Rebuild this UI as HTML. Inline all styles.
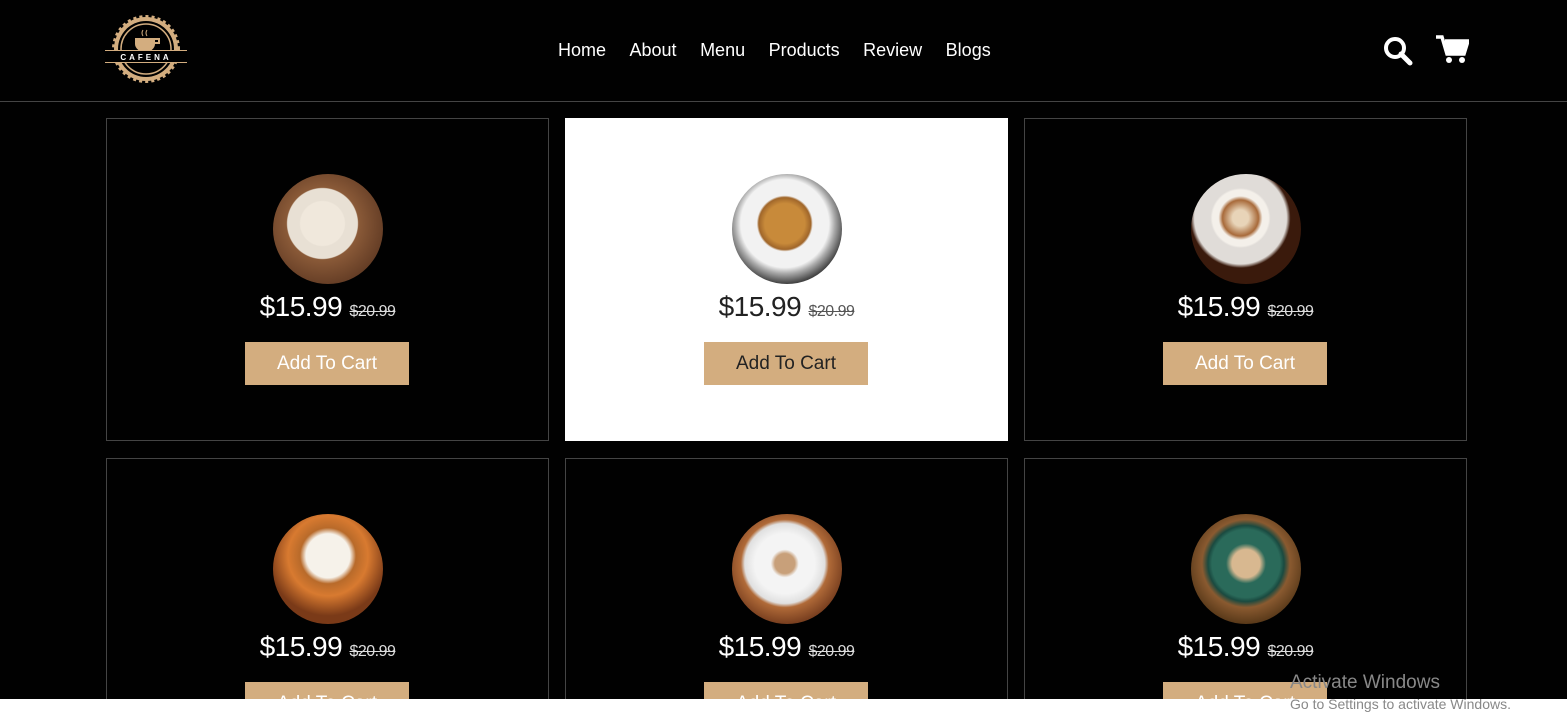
<!DOCTYPE html>
<html style="height:712px;overflow:hidden"><head><style>
*{margin:0;padding:0;box-sizing:border-box}
body{width:1567px;height:712px;background:#010101;overflow:hidden;position:relative;font-family:"Liberation Sans",sans-serif}
.hdr{position:absolute;left:0;top:0;width:1567px;height:102px;border-bottom:1px solid #444}
.nav{position:absolute;top:40px;left:558px;font-size:18px;color:#fff;white-space:nowrap}
.nav span{margin-right:23.5px}
.card{position:absolute;width:443px;height:323px;border:1px solid #444;text-align:center;overflow:hidden}
.card.b{height:241px;border-bottom:none}
.card.w{background:#fff;border-color:#fff}
.img{position:absolute;left:166px;top:55px;width:110px;height:110px;border-radius:50%}
.price{position:absolute;top:172px;left:0;width:100%;font-size:28px;color:#fff;letter-spacing:-0.5px}
.w .price{color:#222}
.price s{font-size:16px;color:#ddd;letter-spacing:-0.5px}
.w .price s{color:#555}
.btn{position:absolute;left:138px;top:223px;width:164px;height:43px;background:#d3ad7f;color:#fff;font-size:19px;line-height:43px}
.b .btn{height:18px;overflow:hidden}
.w .btn{color:#222}
</style></head><body>
<div class="hdr">
<svg style="position:absolute;left:105px;top:14px" width="82" height="70" viewBox="0 0 82 70">
<circle cx="41" cy="35" r="32" fill="#d3ad7f" stroke="#d3ad7f" stroke-width="4" stroke-dasharray="3 3"/>
<circle cx="41" cy="35" r="28" fill="#000"/>
<circle cx="41" cy="35" r="25" fill="none" stroke="#d3ad7f" stroke-width="1.5"/>
<path d="M30 24h20v6a10 8 0 0 1-20 0z" fill="#d3ad7f"/><path d="M50 25h4v4h-4" stroke="#d3ad7f" fill="none" stroke-width="2"/>
<path d="M38 22q-2-3 0-6M42 22q-2-3 0-6" stroke="#d3ad7f" fill="none"/>
<rect x="0" y="36" width="82" height="13" fill="#000"/><rect x="0" y="36" width="82" height="1" fill="#d3ad7f"/><rect x="0" y="48" width="82" height="1" fill="#d3ad7f"/>
<text x="41" y="46" fill="#fff" font-size="8" font-weight="bold" text-anchor="middle" letter-spacing="3" font-family="Liberation Sans">CAFENA</text>
</svg>
<div class="nav"><span>Home</span><span>About</span><span>Menu</span><span>Products</span><span>Review</span><span>Blogs</span></div>
<svg style="position:absolute;left:1383px;top:36px" width="30" height="30" viewBox="0 0 30 30"><circle cx="12" cy="12" r="9" fill="none" stroke="#fff" stroke-width="4"/><path d="M18 18l9 9" stroke="#fff" stroke-width="5" stroke-linecap="round"/></svg>
<svg style="position:absolute;left:1436px;top:35px" width="33" height="30" viewBox="0 0 33 30"><path d="M0 2h6l5 17h17l4-13H9" fill="none" stroke="#fff" stroke-width="3.5"/><path d="M9 6h23l-4 13H11z" fill="#fff"/><circle cx="13" cy="25" r="3" fill="#fff"/><circle cx="26" cy="25" r="3" fill="#fff"/></svg>
</div>
<div class="card" style="left:106px;top:118px"><div class="img" style="background:radial-gradient(circle at 45% 45%,#f0e8dc 0 22px,#e8e0d4 23px 35px,#8a5a38 36px,#5a3520 70px)"></div><div class="price">$15.99 <s>$20.99</s></div><div class="btn">Add To Cart</div></div>
<div class="card w" style="left:565px;top:118px"><div class="img" style="background:radial-gradient(circle at 48% 45%,#c88a3a 0 20px,#a0662a 26px,#f2f2f2 28px 44px,#aaa 50px,#444 60px)"></div><div class="price">$15.99 <s>$20.99</s></div><div class="btn">Add To Cart</div></div>
<div class="card" style="left:1024px;top:118px"><div class="img" style="background:radial-gradient(circle at 45% 40%,#e8d4b8 0 8px,#a86a3a 18px,#f4f0ea 22px 28px,#e0dcd8 30px 46px,#3a1a0c 50px)"></div><div class="price">$15.99 <s>$20.99</s></div><div class="btn">Add To Cart</div></div>
<div class="card b" style="left:106px;top:458px"><div class="img" style="background:radial-gradient(circle at 50% 38%,#f6f2ea 0 22px,#b86a2a 28px,#d87a30 40px,#7a3a18 60px)"></div><div class="price">$15.99 <s>$20.99</s></div><div class="btn">Add To Cart</div></div>
<div class="card b" style="left:565px;top:458px"><div class="img" style="background:radial-gradient(circle at 48% 45%,#c8a07a 0 10px,#f4f4f4 14px 30px,#e0e0e0 40px,#b06a38 44px,#7a4020 60px)"></div><div class="price">$15.99 <s>$20.99</s></div><div class="btn">Add To Cart</div></div>
<div class="card b" style="left:1024px;top:458px"><div class="img" style="background:radial-gradient(circle at 50% 45%,#d8b890 0 14px,#2a6a5a 20px 34px,#1a4a40 38px,#8a5a30 44px,#5a3a1a 60px)"></div><div class="price">$15.99 <s>$20.99</s></div><div class="btn">Add To Cart</div></div>
<div style="position:absolute;z-index:5;left:0;top:699px;width:1567px;height:13px;background:#fff"></div>
<div style="position:absolute;z-index:6;left:1290px;top:672px;font-size:19px;color:#888">Activate Windows</div>
<div style="position:absolute;z-index:6;left:1290px;top:696px;font-size:14px;line-height:16px;color:#888;white-space:nowrap;height:16px;overflow:hidden">Go to Settings to activate Windows.</div>
</body></html>
